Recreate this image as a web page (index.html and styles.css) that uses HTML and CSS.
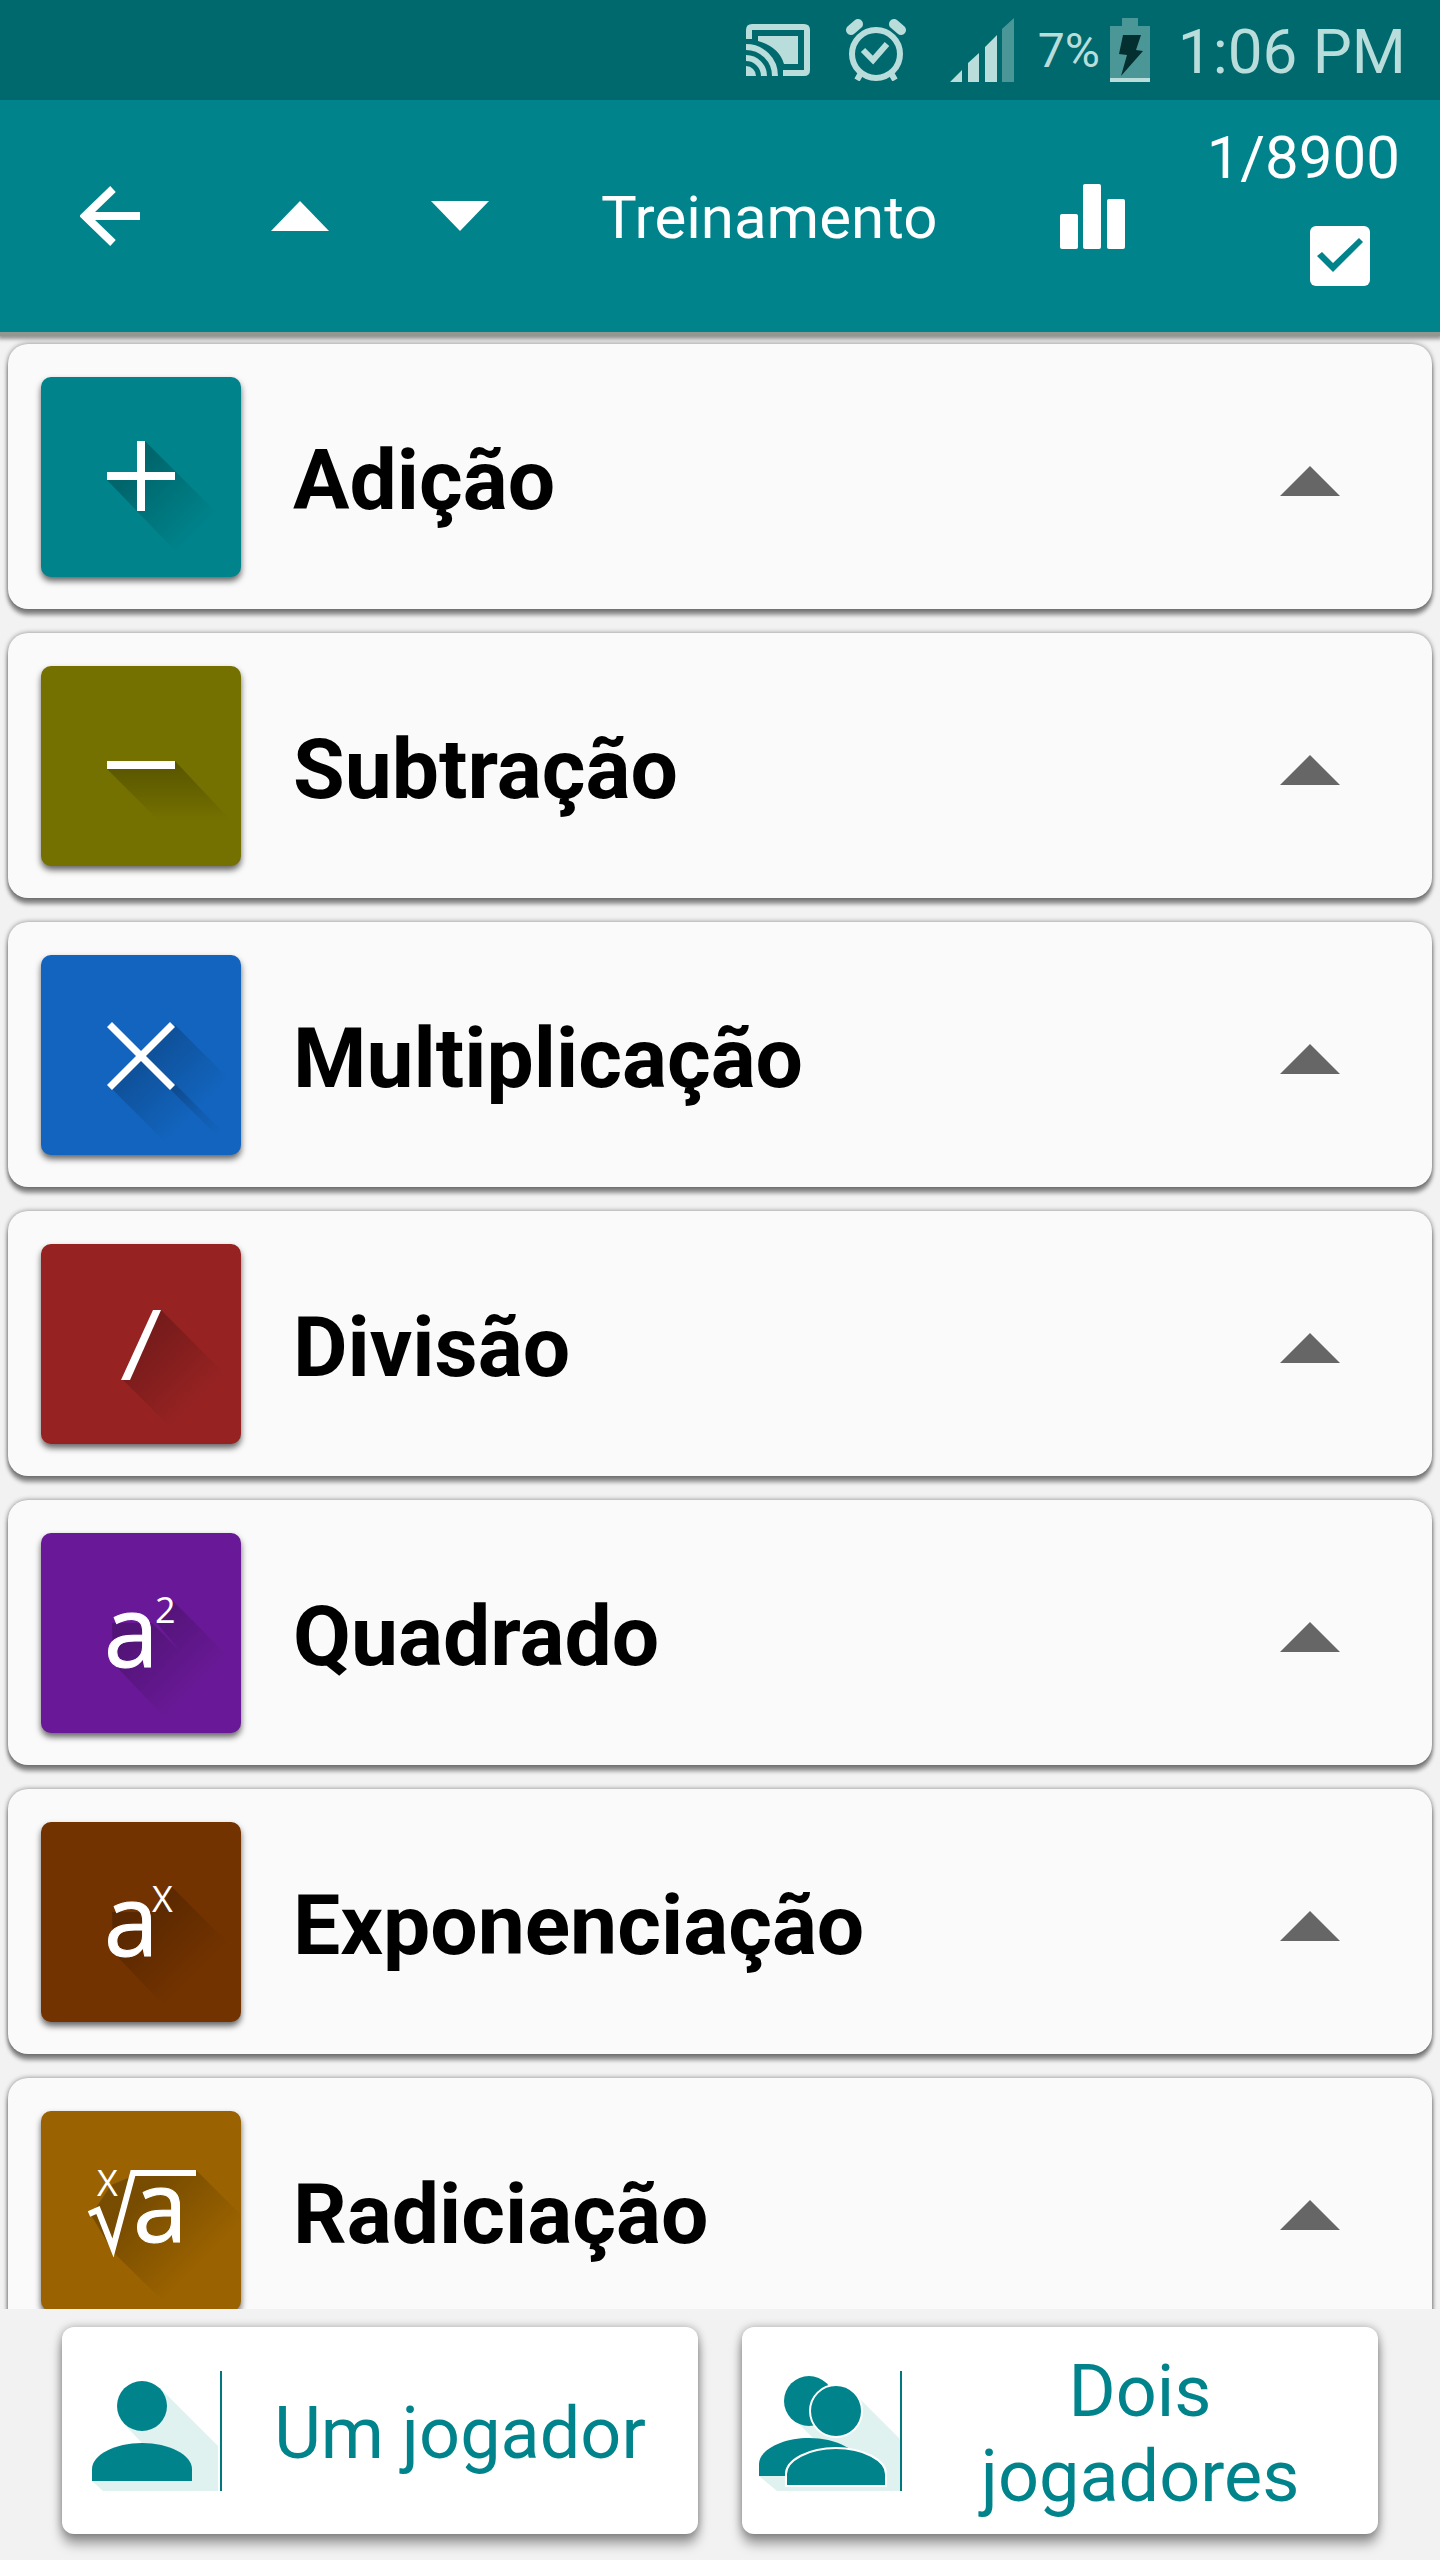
FILE: index.html
```html
<!DOCTYPE html>
<html lang="pt">
<head>
<meta charset="utf-8">
<meta name="viewport" content="width=device-width, initial-scale=1">
<title>Treinamento</title>
<link rel="stylesheet" href="styles.css">
</head>
<body>
<svg class="defs" width="0" height="0" aria-hidden="true">
  <defs>
    <linearGradient id="fade" gradientUnits="userSpaceOnUse" x1="95" y1="95" x2="156" y2="156">
      <stop offset="0" stop-color="#000" stop-opacity=".22"/>
      <stop offset="1" stop-color="#000" stop-opacity="0"/>
    </linearGradient>
    <linearGradient id="fade-down" gradientUnits="userSpaceOnUse" x1="0" y1="100" x2="0" y2="155">
      <stop offset="0" stop-color="#000" stop-opacity=".24"/>
      <stop offset="1" stop-color="#000" stop-opacity="0"/>
    </linearGradient>
    <linearGradient id="fade-streak" gradientUnits="userSpaceOnUse" x1="130" y1="130" x2="178" y2="178">
      <stop offset="0" stop-color="#000" stop-opacity=".2"/>
      <stop offset="1" stop-color="#000" stop-opacity="0"/>
    </linearGradient>
  </defs>
</svg>

<div class="status">
  <svg class="status-cast" width="64" height="52" viewBox="0 0 64 52" aria-hidden="true">
    <path class="line" d="M3 15V6q0-3 3-3h52q3 0 3 3v40q0 3-3 3H37"/>
    <path d="M12 12h40v28H38Q33 23 12 17z"/>
    <path d="M0 42a10 10 0 0 1 10 10H0z"/>
    <path class="line" d="M0 34a18 18 0 0 1 18 18M0 23a29 29 0 0 1 29 29"/>
  </svg>
  <svg class="status-alarm" width="60" height="62" viewBox="0 0 60 62" aria-hidden="true">
    <circle class="line" cx="30" cy="35" r="24"/>
    <path class="line" d="M17 31l10 10 14-16M15 54l-4 7M45 54l4 7"/>
    <path class="ear" d="M5 11l7-6M55 11l-7-6"/>
  </svg>
  <svg class="status-signal" width="64" height="64" viewBox="0 0 64 64" aria-hidden="true">
    <path d="M0 64l12-12v12zM18 45l11-10v29H18zM35 29l12-12v47H35z"/>
    <path class="dim" d="M52 11L64 0v64H52z"/>
  </svg>
  <span class="percent">7%</span>
  <svg class="status-battery" width="40" height="64" viewBox="0 0 40 64" aria-hidden="true">
    <path class="dim" d="M12 0h16v8h12v52H0V8h12z"/>
    <path d="M0 60h40v4H0z"/>
    <path class="bolt" d="M13 17h18l-5 15 7 1-22 25 6-21-8-1z"/>
  </svg>
  <span class="clock">1:06 PM</span>
</div>

<header class="bar">
  <button class="icon-button back" type="button" aria-label="Voltar">
    <svg width="60" height="60" viewBox="0 0 60 60"><path class="stroke" d="M60 30H6M33 3L5 30l28 27"/></svg>
  </button>
  <button class="icon-button up" type="button" aria-label="Recolher">
    <svg width="60" height="30" viewBox="0 0 60 30"><path d="M30 0l29 30H1z"/></svg>
  </button>
  <button class="icon-button down" type="button" aria-label="Expandir">
    <svg width="60" height="30" viewBox="0 0 60 30"><path d="M30 30L1 0h58z"/></svg>
  </button>
  <h1 class="title">Treinamento</h1>
  <button class="icon-button stats" type="button" aria-label="Estatísticas">
    <svg width="65" height="65" viewBox="0 0 65 65"><rect y="30" width="18" height="35" rx="2"/><rect x="23" width="18" height="65" rx="2"/><rect x="47" y="15" width="18" height="50" rx="2"/></svg>
  </button>
  <div class="counter">
    <label for="all">1/8900</label>
    <input id="all" class="check" type="checkbox" checked>
  </div>
</header>

<main class="list-area">
  <ul class="list">
    <li><button class="card" type="button">
      <svg class="tile teal" viewBox="0 0 200 200" aria-hidden="true">
        <path fill="url(#fade)" d="M104 64l79 79v41h-39L66 103h30V64z"/>
        <path d="M96 64h8v31h30v8h-30v31h-8v-31H66v-8h30z"/>
      </svg>
      <span class="name">Adição</span>
      <svg class="arrow" viewBox="0 0 60 30" aria-hidden="true"><path d="M30 0l30 30H0z"/></svg>
    </button></li>
    <li><button class="card" type="button">
      <svg class="tile olive" viewBox="0 0 200 200" aria-hidden="true">
        <path fill="url(#fade-down)" d="M66 103l57 57h72l-61-65z"/>
        <path d="M66 95h68v8H66z"/>
      </svg>
      <span class="name">Subtração</span>
      <svg class="arrow" viewBox="0 0 60 30" aria-hidden="true"><path d="M30 0l30 30H0z"/></svg>
    </button></li>
    <li><button class="card" type="button">
      <svg class="tile blue" viewBox="0 0 200 200" aria-hidden="true">
        <path fill="url(#fade)" d="M134 70l56 56v64h-63L71 134l29-33z"/>
        <path fill="url(#fade-streak)" d="M134 129l50 50-5 5-50-50z"/>
        <path d="M66 72l5-5 29 29 29-29 5 5-29 29 29 29-5 5-29-29-29 29-5-5 29-29z"/>
      </svg>
      <span class="name">Multiplicação</span>
      <svg class="arrow" viewBox="0 0 60 30" aria-hidden="true"><path d="M30 0l30 30H0z"/></svg>
    </button></li>
    <li><button class="card" type="button">
      <svg class="tile red" viewBox="0 0 200 200" aria-hidden="true">
        <path fill="url(#fade)" d="M120 66l62 62v60h-48L82 136z"/>
        <path d="M112 66h8l-31 70h-9z"/>
      </svg>
      <span class="name">Divisão</span>
      <svg class="arrow" viewBox="0 0 60 30" aria-hidden="true"><path d="M30 0l30 30H0z"/></svg>
    </button></li>
    <li><button class="card" type="button">
      <svg class="tile purple" viewBox="0 0 200 200" aria-hidden="true">
        <path fill="url(#fade)" d="M71 90l40 0 74 74v26h-56L72 130zM132 68l60 60v55l-76-93z"/>
        <text class="base" x="63" y="134">a</text>
        <text class="power" x="114" y="90">2</text>
      </svg>
      <span class="name">Quadrado</span>
      <svg class="arrow" viewBox="0 0 60 30" aria-hidden="true"><path d="M30 0l30 30H0z"/></svg>
    </button></li>
    <li><button class="card" type="button">
      <svg class="tile brown" viewBox="0 0 200 200" aria-hidden="true">
        <path fill="url(#fade)" d="M71 90l40 0 74 74v26h-56L72 130zM130 64l60 60v55l-78-89z"/>
        <text class="base" x="63" y="134">a</text>
        <text class="power" x="111" y="90">X</text>
      </svg>
      <span class="name">Exponenciação</span>
      <svg class="arrow" viewBox="0 0 60 30" aria-hidden="true"><path d="M30 0l30 30H0z"/></svg>
    </button></li>
    <li><button class="card" type="button">
      <svg class="tile amber" viewBox="0 0 200 200" aria-hidden="true">
        <path fill="url(#fade)" d="M155 59l45 45v66l-20 20h-58L72 141 50 104l20-30 24-10z"/>
        <text class="power" x="56" y="85">X</text>
        <path class="root" d="M48 103l9-4 15 38 20-75h63"/>
        <text class="base" x="92" y="131">a</text>
      </svg>
      <span class="name">Radiciação</span>
      <svg class="arrow" viewBox="0 0 60 30" aria-hidden="true"><path d="M30 0l30 30H0z"/></svg>
    </button></li>
  </ul>
</main>

<footer class="players">
  <button class="player" type="button">
    <svg class="player-icon" width="160" height="120" viewBox="0 0 160 120" aria-hidden="true">
      <path class="shade" d="M98 17l58 58v45H41L30 110l50-38-18-19z"/>
      <circle cx="80" cy="35" r="25"/>
      <path d="M30 110V98c0-14 23-26 50-26s50 12 50 26v12z"/>
      <path class="divider" d="M158 0h2v120h-2z"/>
    </svg>
    <span class="player-name">Um jogador</span>
  </button>
  <button class="player" type="button">
    <svg class="player-icon" width="160" height="120" viewBox="0 0 160 120" aria-hidden="true">
      <path class="shade" d="M112 22l46 46v52H35L17 105l40-30 14-8-14-14z"/>
      <circle cx="67" cy="30" r="25"/>
      <path d="M17 105V93c0-14 23-26 50-26s50 12 50 26v12z"/>
      <circle class="halo" cx="94" cy="40" r="26"/>
      <path class="halo" d="M44 115v-12c0-14 23-26 50-26s50 12 50 26v12z"/>
      <path class="divider" d="M158 0h2v120h-2z"/>
    </svg>
    <span class="player-name">Dois jogadores</span>
  </button>
</footer>
</body>
</html>
```
FILE: styles.css
```css
:root {
  --teal: #00838b;
  --teal-dark: #00696e;
  --page: #f2f2f2;
  --pale: #b9dddb;
}

* { box-sizing: border-box; }

body {
  margin: 0;
  height: 100vh;
  display: flex;
  flex-direction: column;
  background: var(--page);
  font-family: Roboto, "Liberation Sans", sans-serif;
}

button {
  margin: 0;
  padding: 0;
  border: 0;
  background: none;
  font: inherit;
  color: inherit;
  cursor: pointer;
}

svg { display: block; flex: none; }
.defs { position: absolute; }

/* Status bar */
.status {
  flex: none;
  height: 100px;
  padding-right: 34px;
  display: flex;
  align-items: center;
  justify-content: flex-end;
  background: var(--teal-dark);
  color: var(--pale);
  white-space: nowrap;
}
.status svg { fill: var(--pale); }
.status .line { fill: none; stroke: var(--pale); stroke-width: 6; }
.status .ear { stroke: var(--pale); stroke-width: 10; stroke-linecap: round; }
.status .dim { fill: #4b9798; }
.status .bolt { fill: #042f30; }
.status-cast { margin-right: 36px; }
.status-alarm { margin-right: 44px; }
.status-signal { margin-right: 24px; }
.status-battery { margin-right: 28px; }
.percent { padding-top: 2px; margin-right: 10px; font-size: 48px; line-height: 58px; }
.clock { padding-top: 4px; font-size: 62px; line-height: 76px; }

/* App bar */
.bar {
  position: relative;
  z-index: 1;
  flex: none;
  height: 232px;
  padding: 0 40px 0 80px;
  display: flex;
  align-items: center;
  background: var(--teal);
  color: #fff;
  box-shadow: 0 4px 0 #92978f, 0 5px 4px 2px rgba(0, 0, 0, .4);
}
.icon-button { flex: none; fill: #fff; }
.icon-button .stroke { fill: none; stroke: #fff; stroke-width: 8; }
.back { margin-right: 130px; }
.up { margin-right: 100px; }
.down { margin-right: 111px; }
.title {
  flex: 1;
  margin: 0;
  padding-top: 4px;
  font-size: 60px;
  font-weight: 400;
  line-height: 72px;
}
.counter {
  align-self: flex-start;
  width: 275px;
  padding-top: 22px;
  display: flex;
  flex-direction: column;
  align-items: flex-end;
  gap: 32px;
  font-size: 60px;
  line-height: 72px;
}
.check {
  appearance: none;
  width: 60px;
  height: 60px;
  margin: 0 30px 0 0;
  border-radius: 6px;
  background: #fff;
}
.check:checked::before {
  content: "";
  display: block;
  width: 60px;
  height: 60px;
  background: var(--teal);
  clip-path: polygon(7px 30px, 12px 26px, 23px 37px, 49px 12px, 53px 16px, 23px 46px);
}

/* Operations */
.list-area {
  flex: 1;
  min-height: 0;
  overflow-y: auto;
  scrollbar-width: none;
}
.list {
  margin: 0;
  padding: 12px 8px 24px;
  list-style: none;
  display: grid;
  gap: 24px;
}
.card {
  width: 100%;
  padding: 33px 92px 32px 33px;
  display: flex;
  align-items: center;
  gap: 52px;
  border-radius: 20px;
  background: #fafafa;
  box-shadow: 0 6px 4px rgba(0, 0, 0, .42), 0 0 5px rgba(0, 0, 0, .45);
  text-align: left;
}
.tile {
  width: 200px;
  height: 200px;
  border-radius: 10px;
  box-shadow: 0 4px 6px rgba(0, 0, 0, .6);
  fill: #fff;
}
.teal { background: var(--teal); }
.olive { background: #757100; }
.blue { background: #1264be; }
.red { background: #962222; }
.purple { background: #691997; }
.brown { background: #733300; }
.amber { background: #9a6200; }
.base { font: 400 98px "Open Sans", "Noto Sans", sans-serif; stroke: #fff; stroke-width: 1; }
.power { font: 400 36px "Open Sans", "Noto Sans", sans-serif; }
.root { fill: none; stroke: #fff; stroke-width: 6; }
.name {
  flex: 1;
  padding-top: 8px;
  font-size: 84px;
  font-weight: 700;
  line-height: 100px;
  color: #000;
}
.arrow { width: 60px; height: 38px; padding-top: 8px; fill: #666; }

/* Player choice */
.players {
  flex: none;
  padding: 18px 62px 26px;
  display: grid;
  grid-template-columns: 1fr 1fr;
  gap: 44px;
}
.player {
  min-height: 207px;
  display: flex;
  align-items: center;
  border-radius: 12px;
  background: #fff;
  box-shadow: 0 10px 12px rgba(0, 0, 0, .36), 0 0 8px rgba(0, 0, 0, .3);
  color: var(--teal);
}
.player-icon { fill: var(--teal); }
.shade { fill: #dff2ef; }
.divider { fill: #00787d; }
.halo { stroke: #fff; stroke-width: 2; }
.player-name {
  flex: 1;
  padding: 6px 32px 0;
  font-size: 72px;
  line-height: 85px;
}
```
